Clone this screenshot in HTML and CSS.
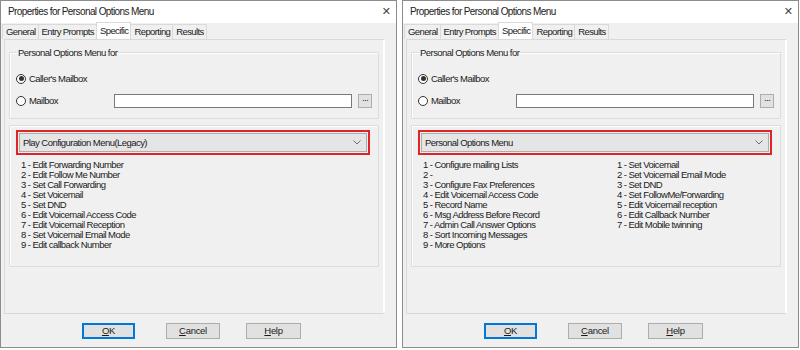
FILE: index.html
```html
<!DOCTYPE html>
<html lang="en">
  <head>
    <meta charset="UTF-8" />
    <title>Properties for Personal Options Menu</title>
    <link rel="stylesheet" href="styles.css">
  </head>
  <body>
    <!-- Legacy menu dialog -->
    <div class="dialog">
      <div class="titlebar">
        <span class="title">Properties for Personal Options Menu</span>
        <span class="close">&#x2715;</span>
      </div>
      <div class="tabs">
        <span class="tab">General</span>
        <span class="tab">Entry Prompts</span>
        <span class="tab active">Specific</span>
        <span class="tab">Reporting</span>
        <span class="tab">Results</span>
      </div>
      <div class="page">
        <fieldset class="group">
          <legend>Personal Options Menu for</legend>
          <div class="radio-row">
            <span class="radio checked"></span>
            <span>Caller's Mailbox</span>
          </div>
          <div class="radio-row">
            <span class="radio"></span>
            <span class="radio-label">Mailbox</span>
            <span class="textbox"></span>
            <span class="browse">&middot;&middot;&middot;</span>
          </div>
        </fieldset>
        <div class="group menu-group">
          <div class="highlight">
            <div class="combo">
              <span>Play Configuration Menu(Legacy)</span>
              <svg class="chevron" width="8" height="5" viewBox="0 0 8 5"><path d="M0.5 0.5 L4 4 L7.5 0.5" fill="none" stroke="#6d6d6d" stroke-width="1"/></svg>
            </div>
          </div>
          <div class="lists">
            <ul class="options">
              <li>1 - Edit Forwarding Number</li>
              <li>2 - Edit Follow Me Number</li>
              <li>3 - Set Call Forwarding</li>
              <li>4 - Set Voicemail</li>
              <li>5 - Set DND</li>
              <li>6 - Edit Voicemail Access Code</li>
              <li>7 - Edit Voicemail Reception</li>
              <li>8 - Set Voicemail Email Mode</li>
              <li>9 - Edit callback Number</li>
            </ul>
          </div>
        </div>
      </div>
      <div class="buttons">
        <button class="btn default"><u>O</u>K</button>
        <button class="btn cancel"><u>C</u>ancel</button>
        <button class="btn help"><u>H</u>elp</button>
      </div>
    </div>

    <!-- Personal options menu dialog -->
    <div class="dialog">
      <div class="titlebar">
        <span class="title">Properties for Personal Options Menu</span>
        <span class="close">&#x2715;</span>
      </div>
      <div class="tabs">
        <span class="tab">General</span>
        <span class="tab">Entry Prompts</span>
        <span class="tab active">Specific</span>
        <span class="tab">Reporting</span>
        <span class="tab">Results</span>
      </div>
      <div class="page">
        <fieldset class="group">
          <legend>Personal Options Menu for</legend>
          <div class="radio-row">
            <span class="radio checked"></span>
            <span>Caller's Mailbox</span>
          </div>
          <div class="radio-row">
            <span class="radio"></span>
            <span class="radio-label">Mailbox</span>
            <span class="textbox"></span>
            <span class="browse">&middot;&middot;&middot;</span>
          </div>
        </fieldset>
        <div class="group menu-group">
          <div class="highlight">
            <div class="combo">
              <span>Personal Options Menu</span>
              <svg class="chevron" width="8" height="5" viewBox="0 0 8 5"><path d="M0.5 0.5 L4 4 L7.5 0.5" fill="none" stroke="#6d6d6d" stroke-width="1"/></svg>
            </div>
          </div>
          <div class="lists">
            <ul class="options">
              <li>1 - Configure mailing Lists</li>
              <li>2 -</li>
              <li>3 - Configure Fax Preferences</li>
              <li>4 - Edit Voicemail Access Code</li>
              <li>5 - Record Name</li>
              <li>6 - Msg Address Before Record</li>
              <li>7 - Admin Call Answer Options</li>
              <li>8 - Sort Incoming Messages</li>
              <li>9 - More Options</li>
            </ul>
            <ul class="options">
              <li>1 - Set Voicemail</li>
              <li>2 - Set Voicemail Email Mode</li>
              <li>3 - Set DND</li>
              <li>4 - Set FollowMe/Forwarding</li>
              <li>5 - Edit Voicemail reception</li>
              <li>6 - Edit Callback Number</li>
              <li>7 - Edit Mobile twinning</li>
            </ul>
          </div>
        </div>
      </div>
      <div class="buttons">
        <button class="btn default"><u>O</u>K</button>
        <button class="btn cancel"><u>C</u>ancel</button>
        <button class="btn help"><u>H</u>elp</button>
      </div>
    </div>
  </body>
</html>
```

FILE: styles.css
```css
* {
  margin: 0;
  padding: 0;
  box-sizing: border-box;
}
body {
  display: flex;
  gap: 5px;
  background-color: #fff;
  font-family: "Liberation Sans", Arial, sans-serif;
  font-size: 9.5px;
  letter-spacing: -0.55px;
  color: #1a1a1a;
}

.dialog {
  width: 397px;
  height: 348px;
  border: 1px solid #8c8c8c;
  background-color: #f0f0f0;
  display: flex;
  flex-direction: column;
}

.titlebar {
  height: 22px;
  background-color: #fff;
  display: flex;
  align-items: center;
  justify-content: space-between;
  padding: 0 5px 0 7px;
}
.title {
  font-size: 10px;
  letter-spacing: -0.6px;
  color: #222;
}
.close {
  font-family: "DejaVu Sans", sans-serif;
  font-size: 11px;
  letter-spacing: 0;
  color: #444;
}

.tabs {
  display: flex;
  height: 15px;
  padding-left: 1px;
  margin-top: 1px;
}
.tab {
  display: flex;
  align-items: center;
  padding: 0 2px 0 3px;
  border: 1px solid #d9d9d9;
  border-bottom: none;
  margin-right: -1px;
  background-color: #f0f0f0;
  letter-spacing: -0.6px;
}
.tab.active {
  background-color: #fff;
  margin-top: -2px;
  height: 17px;
  position: relative;
  z-index: 1;
}

.page {
  margin-left: 3px;
  width: 381px;
  height: 277px;
  border: 1px solid #d9d9d9;
  border-right-color: #fff;
  box-shadow: inset -1px 0 0 #fff;
  padding: 7px 5px 0 4px;
}

.group {
  border: 1px solid #dcdcdc;
  box-shadow: inset 1px 1px 0 #fff;
  border-radius: 1px;
}
fieldset.group {
  height: 72px;
  padding: 14px 0 0 6px;
}
.group legend {
  padding: 0 1px;
  margin-left: 1px;
}

.radio-row {
  display: flex;
  align-items: center;
  height: 14px;
  margin-bottom: 8px;
}
.radio {
  width: 10px;
  height: 10px;
  border: 1px solid #333;
  border-radius: 50%;
  background-color: #fff;
  margin-right: 3px;
  display: flex;
  align-items: center;
  justify-content: center;
}
.radio.checked::after {
  content: "";
  width: 5px;
  height: 5px;
  border-radius: 50%;
  background-color: #333;
}
.radio-label {
  width: 85px;
}
.textbox {
  width: 238px;
  height: 14px;
  border: 1px solid #7a7a7a;
  background-color: #fff;
}
.browse {
  width: 14px;
  height: 14px;
  margin-left: 6px;
  border: 1px solid #adadad;
  background-color: #e1e1e1;
  font-size: 9px;
  line-height: 11px;
  text-align: center;
  letter-spacing: -1px;
}

.menu-group {
  margin-top: 6px;
  height: 142px;
  padding: 4px 8px 0 6px;
}
.highlight {
  border: 2px solid #e02428;
  padding: 1px;
}
.combo {
  height: 19px;
  border: 1px solid #adadad;
  background-color: #e5e5e5;
  display: flex;
  align-items: center;
  justify-content: space-between;
  padding: 0 5px 0 3px;
}

.lists {
  display: flex;
  padding: 5px 0 0 5px;
}
.options {
  list-style: none;
  width: 194px;
  flex-shrink: 0;
  font-size: 9.5px;
  letter-spacing: -0.55px;
  line-height: 10px;
}

.buttons {
  display: flex;
  height: 33px;
  align-items: center;
  padding-left: 81px;
}
.btn {
  width: 54px;
  height: 16px;
  border: 1px solid #adadad;
  background-color: #e1e1e1;
  font-family: inherit;
  font-size: 9.5px;
  letter-spacing: -0.3px;
  color: #1a1a1a;
}
.btn.default {
  width: 53px;
  border-color: #0078d7;
  box-shadow: inset 0 0 0 1px #0078d7;
}
.btn.cancel {
  margin-left: 31px;
}
.btn.help {
  width: 55px;
  margin-left: 26px;
}
```
